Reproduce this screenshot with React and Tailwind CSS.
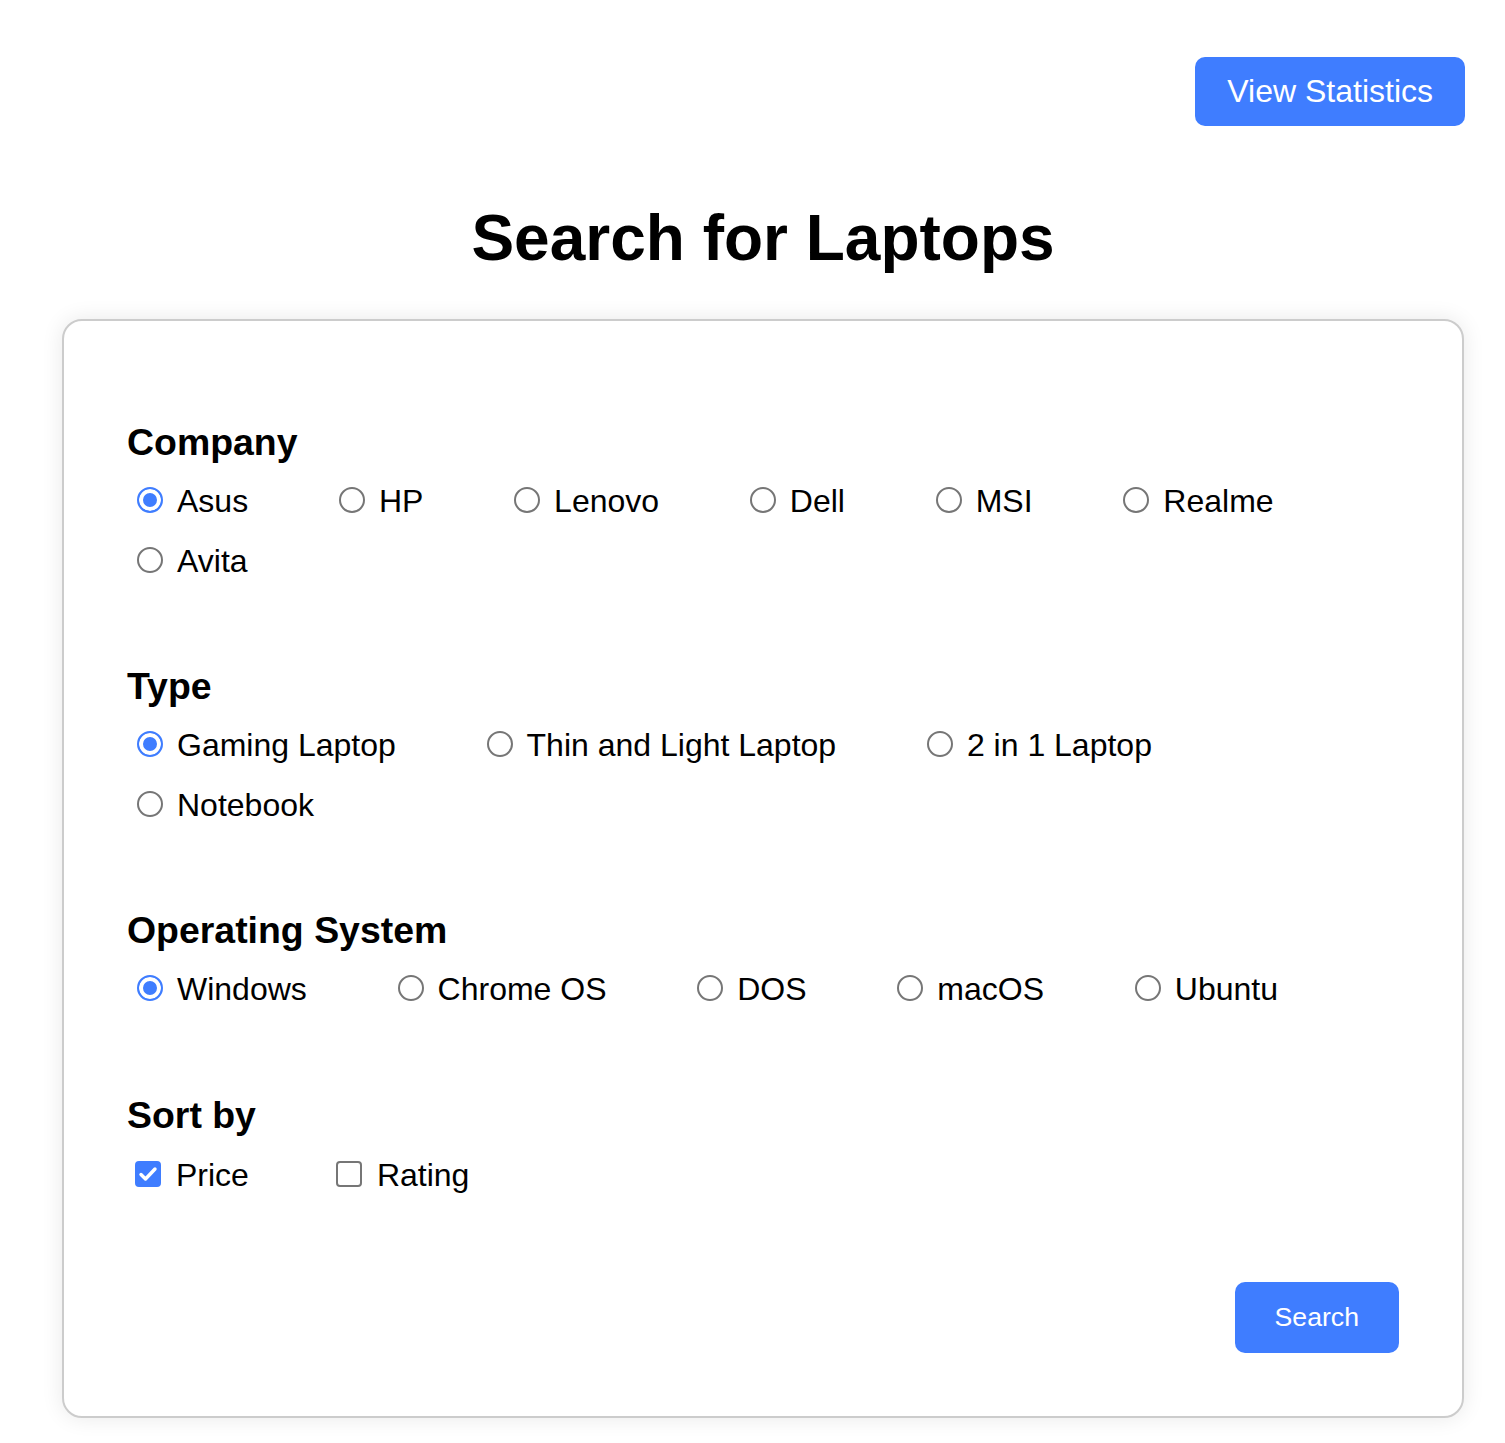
import React, { useState } from "react";

const companies = ["Asus", "HP", "Lenovo", "Dell", "MSI", "Realme", "Avita"];
const types = ["Gaming Laptop", "Thin and Light Laptop", "2 in 1 Laptop", "Notebook"];
const systems = ["Windows", "Chrome OS", "DOS", "macOS", "Ubuntu"];

const RadioGroup = ({ name, options, value, onChange }) => (
  <div className="mt-[19px] flex flex-wrap gap-x-[80.75px] gap-y-[23px]">
    {options.map((opt) => (
      <label key={opt} className="flex items-center text-[32px] leading-[37px] text-black">
        <input
          type="radio"
          name={name}
          checked={value === opt}
          onChange={() => onChange(opt)}
          className="mb-[4px] ml-[10px] mr-[14px] h-[26px] w-[26px] appearance-none rounded-full border-2 border-[#767676] bg-white checked:border-[#3f7dff] checked:bg-[#3f7dff] checked:shadow-[inset_0_0_0_4px_white]"
        />
        {opt}
      </label>
    ))}
  </div>
);

const Checkbox = ({ label, checked, onChange }) => (
  <label className="flex items-center text-[32px] leading-[37px] text-black">
    <span className="relative mb-[4px] ml-[8px] mr-[15px] flex h-[26px] w-[26px]">
      <input
        type="checkbox"
        checked={checked}
        onChange={onChange}
        className="h-[26px] w-[26px] appearance-none rounded-[4px] border-2 border-[#767676] bg-white checked:border-[#3f7dff] checked:bg-[#3f7dff]"
      />
      {checked && (
        <svg className="pointer-events-none absolute inset-0" viewBox="0 0 26 26" width="26" height="26">
          <path d="M6 13.5l4.5 4.5L20 8" fill="none" stroke="white" strokeWidth="3.4" strokeLinecap="round" strokeLinejoin="round" />
        </svg>
      )}
    </span>
    {label}
  </label>
);

const SectionTitle = ({ children, className = "" }) => (
  <h3 className={`text-[37.44px] leading-[43px] font-bold text-black ${className}`}>{children}</h3>
);

export default function App() {
  const [company, setCompany] = useState("Asus");
  const [type, setType] = useState("Gaming Laptop");
  const [os, setOs] = useState("Windows");
  const [sort, setSort] = useState({ price: true, rating: false });

  return (
    <div className="min-h-[1443px] bg-white font-['Liberation_Sans',Arial,sans-serif]">
      <div className="ml-[62px] w-[1402px] pt-[57px]">
        <div className="flex justify-end">
          <button className="mr-[-1px] rounded-[10px] bg-[#3f7dff] px-[32px] py-[16px] text-[32px] leading-[37px] text-white">
            View Statistics
          </button>
        </div>

        <h1 className="mt-[75px] mb-[44px] text-center text-[64px] leading-[74px] font-bold text-black">
          Search for Laptops
        </h1>

        <div className="rounded-[20px] border-2 border-[#cccccc] bg-white px-[63px] pt-[100px] pb-[63px] shadow-[0_0_22px_rgba(0,0,0,0.09)]">
          <SectionTitle>Company</SectionTitle>
          <RadioGroup name="company" options={companies} value={company} onChange={setCompany} />

          <SectionTitle className="mt-[85px]">Type</SectionTitle>
          <RadioGroup name="type" options={types} value={type} onChange={setType} />

          <SectionTitle className="mt-[85px]">Operating System</SectionTitle>
          <RadioGroup name="os" options={systems} value={os} onChange={setOs} />

          <SectionTitle className="mt-[86px]">Sort by</SectionTitle>
          <div className="mt-[20px] flex flex-wrap gap-x-[79px]">
            <Checkbox label="Price" checked={sort.price} onChange={() => setSort({ ...sort, price: !sort.price })} />
            <Checkbox label="Rating" checked={sort.rating} onChange={() => setSort({ ...sort, rating: !sort.rating })} />
          </div>

          <div className="mt-[88px] flex justify-end">
            <button className="rounded-[10px] bg-[#3f7dff] px-[40px] py-[20px] text-[26.67px] leading-[31px] text-white">
              Search
            </button>
          </div>
        </div>
      </div>
    </div>
  );
}
